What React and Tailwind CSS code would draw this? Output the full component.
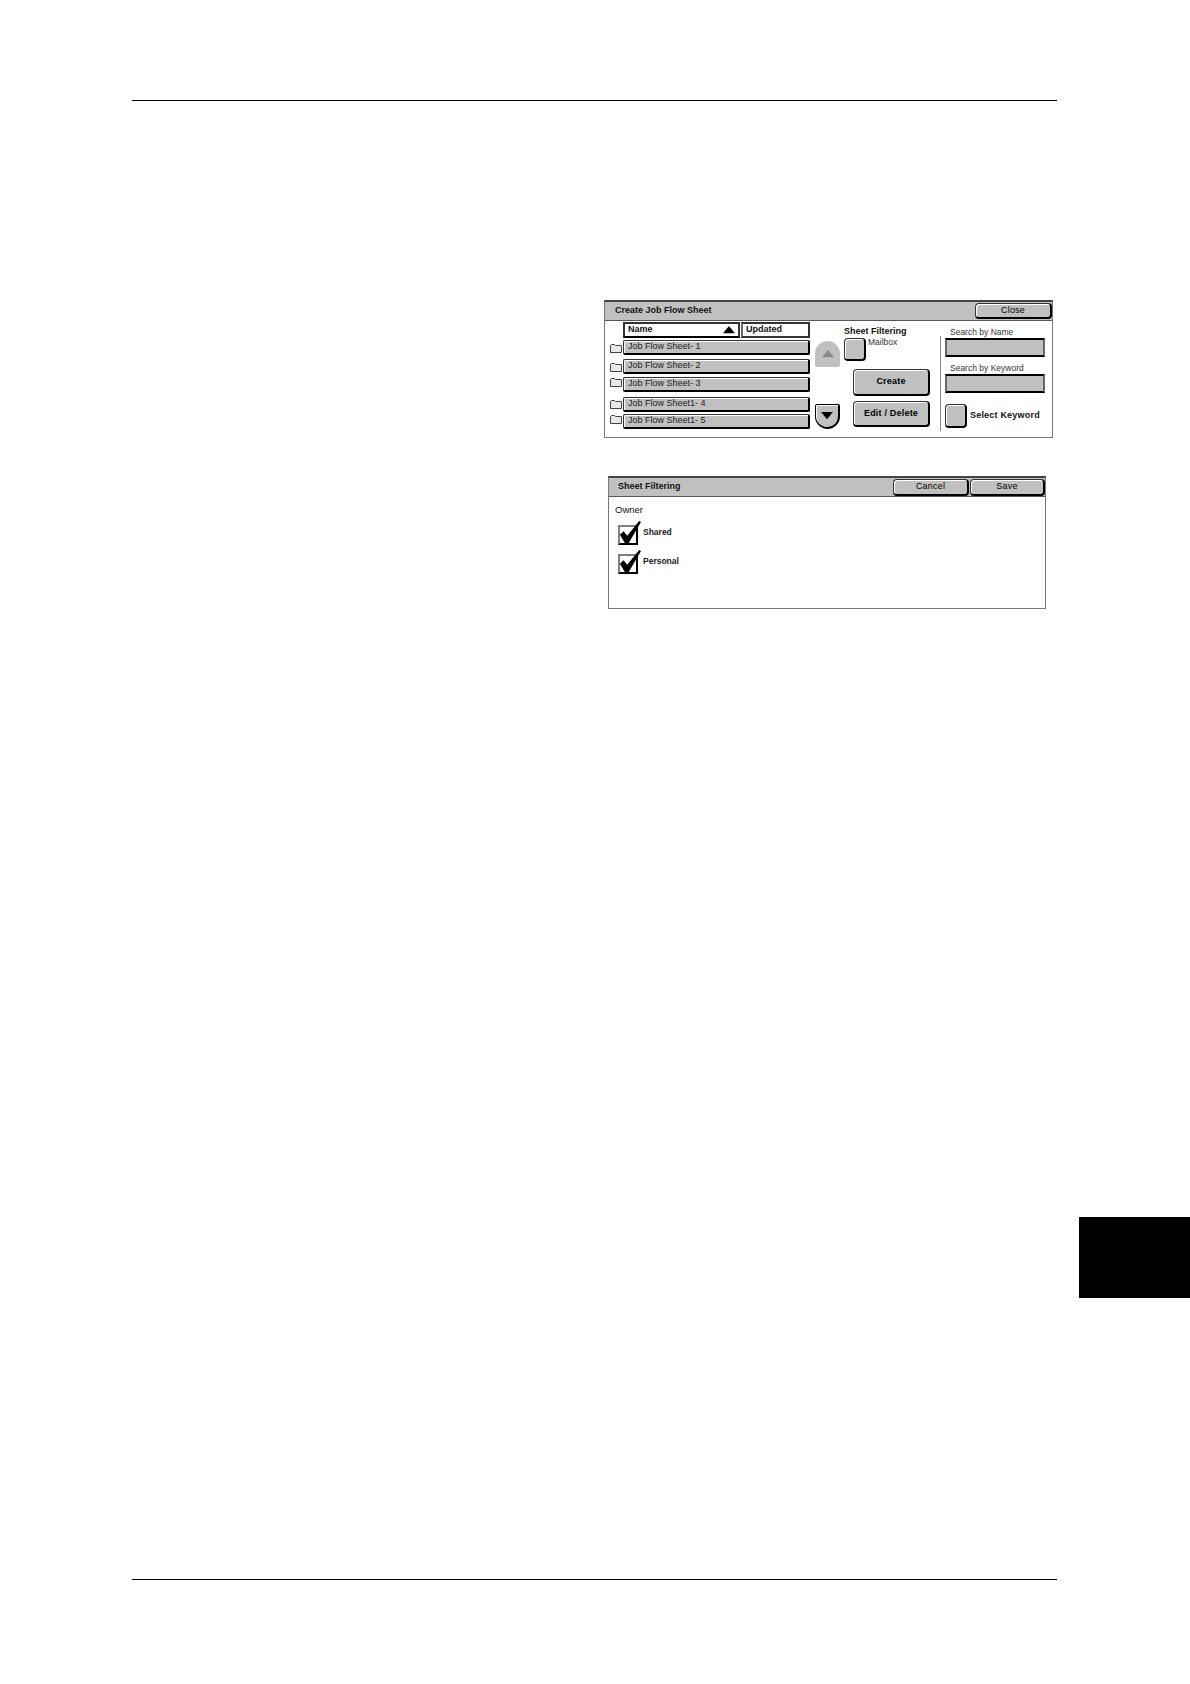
import React from 'react';

const rows = [
  { label: 'Job Flow Sheet- 1', row: 'mt-[2px]', folder: 'mt-[4px]' },
  { label: 'Job Flow Sheet- 2', row: 'mt-[4px]', folder: 'mt-[4px]' },
  { label: 'Job Flow Sheet- 3', row: 'mt-[3px]', folder: 'mt-[1px]' },
  { label: 'Job Flow Sheet1- 4', row: 'mt-[5px]', folder: 'mt-[3px]' },
  { label: 'Job Flow Sheet1- 5', row: 'mt-[2px]', folder: 'mt-[1px]' },
];

const bevel = 'bg-[#c0c0c0] border border-[#333] border-r-2 border-b-2 border-r-black border-b-black shadow-[inset_1px_1px_0_#ffffff]';

function Folder({ className }) {
  return (
    <svg width="12" height="9" viewBox="0 0 12 9" className={`shrink-0 ${className}`} fill="#e8e8e8" stroke="#444" strokeWidth="1">
      <path d="M0.5 8.5V1.5L1.5 0.5H4.5L5.5 1.5H11.5V8.5Z" />
    </svg>
  );
}

function Triangle({ down, color, size = 12 }) {
  return (
    <svg width={size} height={size * 0.6} viewBox="0 0 10 6" fill={color}>
      <path d={down ? 'M0 0H10L5 6Z' : 'M5 0L10 6H0Z'} />
    </svg>
  );
}

function Square({ className }) {
  return <div className={`${bevel} rounded-[4px] ${className}`} />;
}

function Button({ children, className }) {
  return (
    <div className={`${bevel} rounded-[4px] flex items-center justify-center tracking-[0.2px] text-[9px] text-black ${className}`}>
      {children}
    </div>
  );
}

function SearchField({ label, className }) {
  return (
    <div className={className}>
      <div className="text-[8.5px] leading-[11px] pl-[5px] text-[#333]">{label}</div>
      <div className="h-[19px] w-[100px] bg-[#c0c0c0] border-2 border-t-black border-l-[#666] border-r-[#666] border-b-black" />
    </div>
  );
}

function CheckRow({ label, className }) {
  return (
    <div className={`flex items-start ${className}`}>
      <div className="relative w-[20px] h-[20px] bg-white border-2 border-[#808080] border-r-black border-b-black">
        <svg viewBox="0 0 24 26" className="absolute left-[-1px] top-[-6px] w-[22px] h-[24px] overflow-visible" fill="#000">
          <path d="M1 15L5 11L9 16L22 0L24 1L10 25H7Z" />
        </svg>
      </div>
      <span className="ml-[5px] mt-[1px] font-bold text-[8.5px] leading-[12px] text-[#222]">{label}</span>
    </div>
  );
}

function JobFlowPanel() {
  return (
    <div className="ml-[604px] mt-[199px] w-[449px] h-[138px] bg-white border border-[#777] border-t-2 border-t-[#444] flex flex-col">
      <div className="h-[19px] shrink-0 bg-[#c0c0c0] border-b border-[#555] flex items-center justify-between pl-[10px] pr-0">
        <span className="font-bold text-[9px] text-[#111]">Create Job Flow Sheet</span>
        <Button className="w-[77px] h-[16px]">Close</Button>
      </div>
      <div className="flex flex-1 pl-[5px]">
        <div className="w-[200px] shrink-0">
          <div className="flex ml-[13px] mt-[1px] h-[16px] text-[9px] font-bold text-[#111]">
            <div className="w-[117px] border-2 border-[#333] border-b-black flex items-center justify-between pl-[3px] pr-[3px]">
              <span>Name</span>
              <Triangle color="#000" />
            </div>
            <div className="w-[69px] ml-[1px] border-2 border-[#333] border-l-[#666] pl-[3px] flex items-center">Updated</div>
          </div>
          {rows.map((r) => (
            <div key={r.label} className={`flex items-start ${r.row}`}>
              <Folder className={r.folder} />
              <div className={`${bevel} ml-[1px] w-[187px] h-[15px] rounded-[2px] flex items-center pl-[4px] text-[9px] text-[#222]`}>
                {r.label}
              </div>
            </div>
          ))}
        </div>
        <div className="w-[25px] ml-[5px] shrink-0 flex flex-col justify-between pt-[20px] pb-[8px]">
          <div className="h-[26px] bg-[#c0c0c0] rounded-t-[13px] rounded-b-[2px] flex items-center justify-center">
            <Triangle color="#8a8a8a" />
          </div>
          <div className="h-[25px] bg-[#c0c0c0] border border-black border-r-2 border-b-2 rounded-b-[13px] rounded-t-[2px] shadow-[inset_1px_1px_0_#ffffff] flex items-center justify-center">
            <Triangle down color="#000" />
          </div>
        </div>
        <div className="w-[86px] ml-[4px] shrink-0 flex flex-col">
          <div className="mt-[4px] text-[9px] leading-[12px] font-bold text-[#111]">Sheet Filtering</div>
          <div className="flex mt-[1px]">
            <Square className="w-[22px] h-[23px]" />
            <span className="ml-[2px] text-[8.5px] leading-[9px] text-[#333]">Mailbox</span>
          </div>
          <Button className="ml-[9px] mt-[8px] w-[77px] h-[27px] font-bold">Create</Button>
          <Button className="ml-[9px] mt-[5px] w-[77px] h-[26px] font-bold">Edit / Delete</Button>
        </div>
        <div className="ml-[10px] mt-[15px] mb-[6px] w-px bg-[#888]" />
        <div className="ml-[4px] flex-1 flex flex-col">
          <SearchField label="Search by Name" className="mt-[6px]" />
          <SearchField label="Search by Keyword" className="mt-[6px]" />
          <div className="flex items-center mt-[11px]">
            <Square className="w-[22px] h-[24px]" />
            <span className="ml-[3px] font-bold text-[9px] tracking-[0.2px] text-[#111]">Select Keyword</span>
          </div>
        </div>
      </div>
    </div>
  );
}

function SheetFilteringPanel() {
  return (
    <div className="ml-[608px] mt-[38px] w-[438px] h-[133px] bg-white border border-[#777] border-t-2 border-t-[#444] flex flex-col">
      <div className="h-[19px] shrink-0 bg-[#c0c0c0] border-b border-[#555] flex items-center pl-[9px]">
        <span className="font-bold text-[9px] text-[#111]">Sheet Filtering</span>
        <Button className="ml-auto w-[76px] h-[17px]">Cancel</Button>
        <Button className="ml-[1px] w-[75px] h-[17px]">Save</Button>
      </div>
      <div className="pl-[6px] pt-[7px]">
        <div className="text-[9.5px] leading-[12px] text-[#111]">Owner</div>
        <CheckRow label="Shared" className="ml-[3px] mt-[9px]" />
        <CheckRow label="Personal" className="ml-[3px] mt-[9px]" />
      </div>
    </div>
  );
}

export default function App() {
  return (
    <div className="w-[1190px] h-[1684px] bg-white flex flex-col font-['Liberation_Sans',Arial,sans-serif] overflow-hidden">
      <div className="ml-[132px] mt-[100px] w-[925px] h-px bg-black shrink-0" />
      <JobFlowPanel />
      <SheetFilteringPanel />
      <div className="self-end mt-[608px] w-[111px] h-[81px] bg-black shrink-0" />
      <div className="ml-[132px] mt-[281px] w-[925px] h-px bg-black shrink-0" />
    </div>
  );
}
